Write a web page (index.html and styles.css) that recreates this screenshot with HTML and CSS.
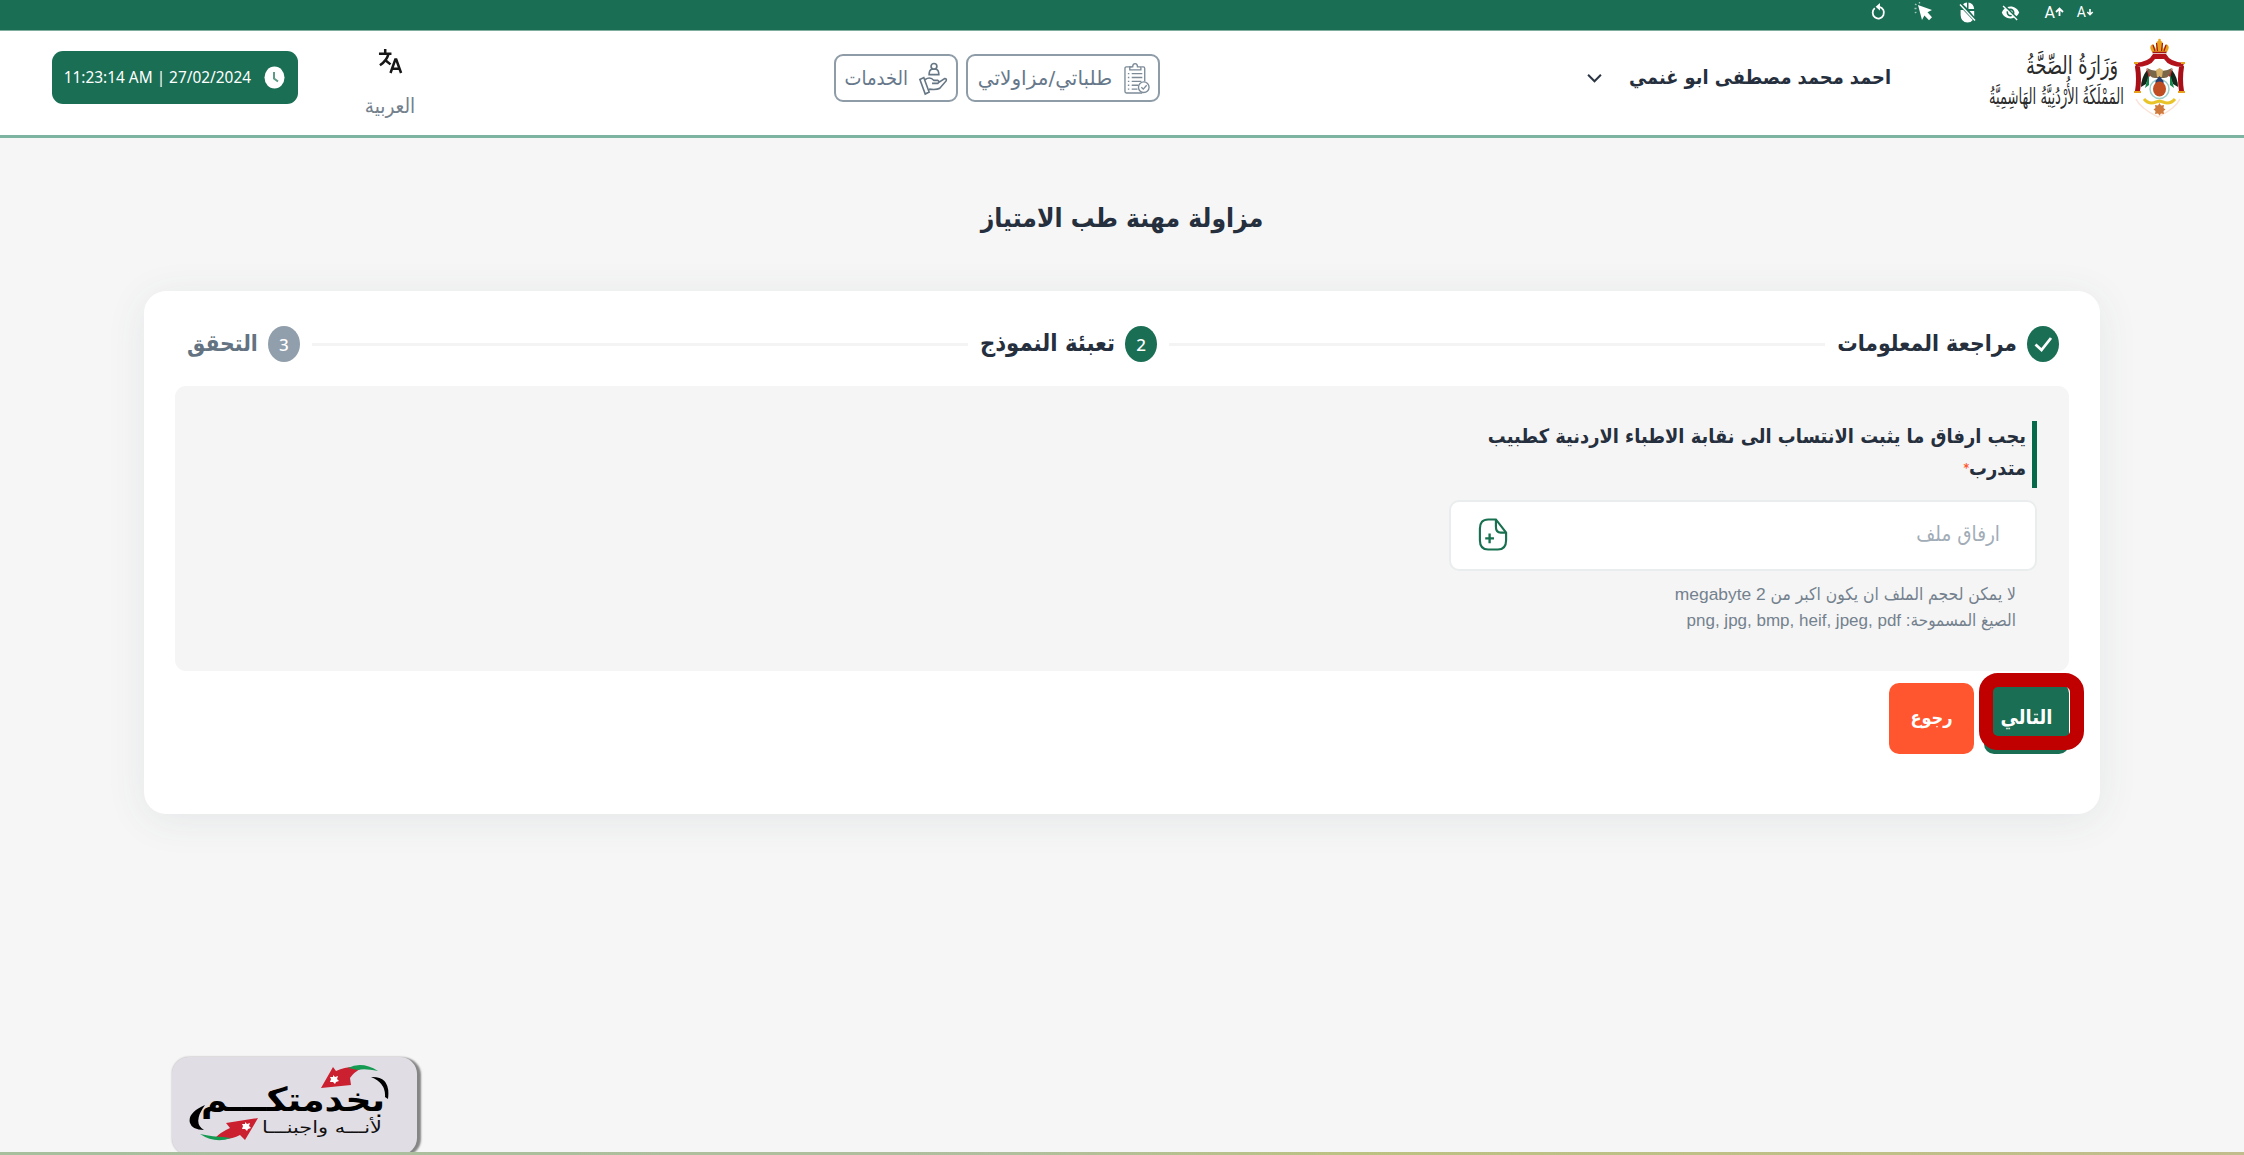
FILE: index.html
```html
<!DOCTYPE html>
<html lang="ar" dir="rtl">
<head>
<meta charset="utf-8">
<title>مزاولة مهنة طب الامتياز</title>
<link rel="stylesheet" href="styles.css">
</head>
<body>
<div class="topbar">
  <span class="a-icon small">A<svg width="8" height="11" viewBox="0 0 9 12"><path d="M4.500 2v6M1.500 5.500l3 3 3-3" fill="none" stroke="#fff" stroke-width="1.800"/></svg></span>
  <span class="a-icon">A<svg width="9" height="12" viewBox="0 0 9 12"><path d="M4.500 10V3M1 6l3.500-3.500L8 6" fill="none" stroke="#fff" stroke-width="1.800"/></svg></span>
  <svg class="ic-eye" width="19" height="19" viewBox="0 0 24 24"><path fill="#fff" d="M12 7c2.760 0 5 2.240 5 5 0 .65-.13 1.260-.36 1.830l2.920 2.920c1.510-1.260 2.700-2.890 3.430-4.750-1.730-4.390-6-7.500-11-7.500-1.400 0-2.740.25-3.980.7l2.160 2.160C10.740 7.130 11.350 7 12 7zM2 4.270l2.280 2.280.46.46C3.080 8.300 1.780 10.020 1 12c1.730 4.390 6 7.500 11 7.500 1.550 0 3.030-.3 4.380-.84l.42.42L19.730 22 21 20.730 3.270 3 2 4.270zM7.530 9.800l1.550 1.550c-.05.21-.08.43-.08.65 0 1.660 1.340 3 3 3 .22 0 .44-.03.65-.08l1.550 1.550c-.67.33-1.410.53-2.200.53-2.760 0-5-2.240-5-5 0-.79.2-1.530.53-2.200zm4.310-.78l3.150 3.150.02-.16c0-1.660-1.340-3-3-3l-.17.01z"/></svg>
  <svg class="ic-mouse" width="17" height="21" viewBox="0 0 17 21"><path fill="#fff" d="M4 2.200Q5.500.6 8 .4V6zM9.500.4Q14.600 1.200 15.200 7H9.500zM1.600 8h2.600l9.600 10.100Q12 20.600 8.500 20.600 1.800 20.200 1.600 13zM10.500 9h4.700v5.400z"/><path d="M1 2.500l15 16" stroke="#fff" stroke-width="1.400"/></svg>
  <svg class="ic-cursor" width="19" height="20" viewBox="0 0 19 20"><path fill="#fff" d="M4 3l14 5-4.500 2.200 4.500 5-3 3-4.600-4.600L8 18z"/><path d="M.5 6.500h2M1 2l1.500 1M5.500 0v1.500M.8 11l1.600-1" stroke="#fff" stroke-opacity=".6" stroke-width="1.300"/></svg>
  <svg class="ic-reset" width="15" height="18" viewBox="0 0 16 19"><path d="M4 5.300A6 6.300 0 1 0 9 4" fill="none" stroke="#fff" stroke-width="1.900"/><path d="M9.500 0v8L5 4z" fill="#fff"/></svg>
</div>

<header class="header">
  <svg class="brand" width="200" height="84" viewBox="0 0 200 84" direction="rtl">
    <g class="calligraphy">
      <text x="131" y="36" font-size="25" textLength="92" lengthAdjust="spacingAndGlyphs">وَزَارَةُ الصِّحَّةُ</text>
      <text x="137" y="66" font-size="22" textLength="135" lengthAdjust="spacingAndGlyphs">المَمْلَكَةُ الأُرْدُنِيَّةُ الهَاشِمِيَّةُ</text>
    </g>
    <path d="M149 61q4 9 22 18 18-9 22-18" fill="none" stroke="#fbe3d8" stroke-width="1.500"/>
    <path d="M165 14q-4-6 1-8l3 5 .5-7 3-2 3 2 .5 7 3-5q5 2 1 8z" fill="#e8a21c"/>
    <path d="M168 13l-2-6M170.500 13l-1-8M174.500 13l1-8M177 13l2-6" stroke="#a31515" stroke-width="1.200"/>
    <circle cx="172.500" cy="2" r="1.300" fill="#e8a21c"/>
    <path d="M165.500 14.500h14" stroke="#a31515" stroke-width="1.600"/>
    <path d="M148 25q14-1 18-9h13q4 8 18 9l-1 4q-14 0-19-8h-9q-5 8-19 8z" fill="#b3121b"/>
    <path d="M148 28l5 1q2 12 0 24h-5q2-12 0-24zM197 28l-5 1q-2 12 0 24h5q-2-12 0-24z" fill="#a80f17"/>
    <path d="M147 54h7M191 54h7M147 25h4M194 25h4" stroke="#e8a21c" stroke-width="2"/>
    <path d="M160 32q-6 8-6 17l5-3 4-10zM185 32q6 8 6 17l-5-3-4-10z" fill="#15261c"/>
    <path d="M162 35l-4 15 4-3zM183 35l4 15-4-3z" fill="#12864b"/>
    <path d="M159 30l5 7-2 2zM186 30l-5 7 2 2z" fill="#d01e2a"/>
    <path d="M160 30q7 4 12.500 2 5.500 2 12.500-2-2 10-8 10h-9q-6 0-8-10z" fill="#7a6648"/>
    <path d="M169 32l3.500-2 3.500 2-1 7h-5z" fill="#d8b36b"/>
    <circle cx="172.500" cy="51" r="9.500" fill="none" stroke="#9ed0cb" stroke-width="1.500"/>
    <path d="M168.500 43l4-5 4 5v3h-8z" fill="#253e6d"/>
    <ellipse cx="172.500" cy="51" rx="6.500" ry="7.500" fill="#bf4f22"/>
    <path d="M157 61q5 6 12 3l3.500-1 3.500 1q7 3 12-3" fill="none" stroke="#e9c429" stroke-width="3"/>
    <path d="M172.500 65l1.500 2.500 3-.5-.5 3 2 1.500-2 1.500.5 3-3-.5-1.500 2-1.500-2-3 .5.500-3-2-1.500 2-1.500-.5-3 3 .5z" fill="#cf7a3c"/>
  </svg>

  <div class="user">
    <span>احمد محمد مصطفى ابو غنمي</span>
    <svg width="17" height="11" viewBox="0 0 18 12"><path d="M2 2l7 7 7-7" fill="none" stroke="#2b3543" stroke-width="2.200"/></svg>
  </div>

  <nav class="nav">
    <a class="nav-btn requests">
      <svg width="27" height="33" viewBox="0 0 28 34" fill="none" stroke="#7d8b98" stroke-width="1.400"><path d="M8 5H2.500q-1.500 0-1.500 1.500v24q0 1.500 1.500 1.500H19M18 5h2q1.500 0 1.500 1.500V20"/><path d="M6 8V5h3q0-3.500 2.500-3.500T14 5h3.500v3z"/><path d="M8 12h11M8 16h11M8 20h10M8 24h7M8 28h6"/><path d="M4 12h1.500M4 16h1.500M4 20h1.500M4 24h1.500M4 28h1.500"/><circle cx="20.500" cy="26" r="5.500" fill="#fff"/><path d="M18 26l2 2 3.500-4"/></svg>
      <span>طلباتي/مزاولاتي</span>
    </a>
    <a class="nav-btn services">
      <svg width="30" height="33" viewBox="0 0 30 34" fill="none" stroke="#667684" stroke-width="1.700"><circle cx="16" cy="4.500" r="3"/><path d="M11 13q0-5 3-5.500h4q3 .5 3 5.500z"/><path d="M1.500 18l4-2 5.500 15-4 2zM7 18q5-3.500 9 1h4q2 1 0 3h-6M21 21l6-4q2.500 0 1.500 2.500L22 27q-3 2-11 1"/></svg>
      <span>الخدمات</span>
    </a>
  </nav>

  <div class="lang">
    <svg width="25" height="27" viewBox="0 0 26 28" fill="none" stroke="#171717" stroke-width="2.600"><path d="M1 6h13M7.500 1v5M11 6q-2 7-9 12M8 13l5 4"/><path d="M13 26l5-14h1l5 14M15 21.500h7.500"/></svg>
    <span>العربية</span>
  </div>

  <div class="clock">
    <svg width="21" height="23" viewBox="0 0 21 23"><ellipse cx="10.500" cy="11.500" rx="10" ry="11" fill="#fff"/><path d="M10 6v6.500l4 3" fill="none" stroke="#5d9b86" stroke-width="2"/></svg>
    <span dir="ltr">11:23:14 AM | 27/02/2024</span>
  </div>
</header>

<main>
  <h1>مزاولة مهنة طب الامتياز</h1>
  <section class="card">
    <div class="steps">
      <span class="dot"><svg width="19" height="17" viewBox="0 0 19 17"><path d="M1.500 8.500l6 5.500L17 2" fill="none" stroke="#fff" stroke-width="2.800"/></svg></span>
      <span class="step-name s1">مراجعة المعلومات</span>
      <i class="line"></i>
      <span class="dot">2</span>
      <span class="step-name s2">تعبئة النموذج</span>
      <i class="line"></i>
      <span class="dot idle">3</span>
      <span class="step-name s3">التحقق</span>
    </div>
    <div class="panel">
      <div class="field">
        <label>يجب ارفاق ما يثبت الانتساب الى نقابة الاطباء الاردنية كطبيب<br>متدرب<sup>*</sup></label>
        <div class="upload">
          <span>ارفاق ملف</span>
          <svg width="30" height="33" viewBox="0 0 30 34" fill="none" stroke="#17704f" stroke-width="2.200"><path d="M18 1.500H10Q1.500 1.500 1.500 11v12q0 9.500 8.500 9.500h10q8.500 0 8.500-9.500V15z"/><path d="M18 1.500V9q0 6 5 6h5.500"/><path d="M11.500 16v10M7 21h9" stroke-width="2.400"/></svg>
        </div>
        <p class="hint">لا يمكن لحجم الملف ان يكون اكبر من 2 megabyte</p>
        <p class="hint last">الصيغ المسموحة: png, jpg, bmp, heif, jpeg, pdf</p>
      </div>
    </div>
    <div class="actions">
      <button class="btn next">التالي<i class="marker"></i></button>
      <button class="btn back">رجوع</button>
    </div>
  </section>
</main>

<div class="badge">
  <svg width="245" height="98" viewBox="0 0 245 98" direction="rtl">
    <text x="213" y="54" class="motto" textLength="184" lengthAdjust="spacingAndGlyphs">بخدمتكـــم</text>
    <text x="210" y="76" class="sub" textLength="120" lengthAdjust="spacingAndGlyphs">لأنـــه واجبنـــا</text>
    <path d="M199 20q20-1 17 22l-3-2q1-14-14-20zM33 48q-18 8-15 18 2 7 14 7-12-7 1-25z" fill="#000"/>
    <path d="M149 31l12-21 3 4q13-6 26-3-8 4-12 10l1 7z" fill="#cb2030"/>
    <path d="M176 11q14-7 30 3-14-3-20-1z" fill="#159a52"/>
    <path d="M86 61L54 66l4 5q-9 4-15 10 14 3 25-3l5 5z" fill="#cb2030"/>
    <path d="M28 77q14 3 23 3l8 1q-16 6-31-4z" fill="#159a52"/>
    <path d="M161 18l2 2 3-1-1 3 2 2-3 1-1 2-2-2-3 0 1-3-1-2 3 0zM73 65l2 2 3-1-1 3 2 2-3 1-1 2-2-2-3 0 1-3-1-2 3 0z" fill="#fff"/>
  </svg>
</div>
<div class="bottom-strip"></div>
</body>
</html>
```
FILE: styles.css
```css
* { box-sizing: border-box; }
body {
  margin: 0;
  height: 1155px;
  overflow: hidden;
  display: flex;
  flex-direction: column;
  background: #f6f6f6;
  color: #252f3d;
  font-family: "DejaVu Sans Condensed", "DejaVu Sans", sans-serif;
  font-stretch: condensed;
  font-size: 20px;
  white-space: nowrap;
}
svg { display: block; flex: none; overflow: visible; }

.topbar {
  height: 31px;
  flex: none;
  display: flex;
  align-items: center;
  padding: 0 150px 6px 0;
  background: #1a6e54;
  border-bottom: 1px solid #7fae9e;
  color: #fff;
}
.a-icon {
  display: flex;
  flex-direction: row-reverse;
  align-items: center;
  font: 14px Roboto, sans-serif;
}
.a-icon:not(.small) { margin-right: 13px; font-size: 16px; }
.ic-eye { margin-right: 24px; }
.ic-mouse { margin-right: 25px; }
.ic-cursor { margin-right: 26px; }
.ic-reset { margin-right: 28px; }

.header {
  height: 107px;
  flex: none;
  display: flex;
  align-items: flex-start;
  padding: 0 57px 0 52px;
  background: #fff;
  border-bottom: 3px solid #7db3a1;
}
.brand { margin-top: 7px; }
.calligraphy { font-family: "DejaVu Sans", sans-serif; fill: #2a2a2a; }
.user {
  display: flex;
  align-items: center;
  margin: 33px 96px 0 0;
  font-weight: bold;
  font-size: 19.800px;
  line-height: 28px;
  gap: 26px;
}
.nav { display: flex; gap: 8px; margin: 23px 426px 0 0; }
.nav-btn {
  height: 48px;
  display: flex;
  align-items: center;
  border: 2px solid #8e9ca8;
  border-radius: 9px;
  color: #66788a;
  line-height: 28px;
}
.requests { width: 194px; padding-right: 7px; gap: 12px; font-family: "DejaVu Sans", sans-serif; font-stretch: normal; }
.services { width: 124px; padding-right: 8px; gap: 10px; }
.lang {
  width: 60px;
  margin: 17px auto 0 0;
  display: flex;
  flex-direction: column;
  align-items: center;
  gap: 17px;
  color: #74818d;
  font-size: 20.500px;
  line-height: 28px;
}
.clock {
  width: 246px;
  height: 53px;
  margin: 20px 62px 0 0;
  display: flex;
  align-items: center;
  gap: 13px;
  padding-right: 13px;
  border-radius: 11px;
  background: #1a6e54;
  color: #fff;
  font: 15.400px "Noto Sans", sans-serif;
}

main { padding: 0 144px; }
h1 {
  margin: 64px 0 0;
  height: 89px;
  line-height: 32px;
  text-align: center;
  font-size: 26.200px;
}
.card {
  height: 523px;
  padding: 35px 31px 0;
  background: #fff;
  border-radius: 22px;
  box-shadow: 0 6px 40px rgba(60, 80, 90, .09);
}
.steps { height: 36px; display: flex; align-items: center; margin: 0 10px 24px 12px; }
.dot {
  width: 32px;
  height: 36px;
  flex: none;
  display: flex;
  align-items: center;
  justify-content: center;
  border-radius: 50%;
  background: #1a6e54;
  color: #fff;
  font: 500 17px "Noto Sans", sans-serif;
}
.dot.idle { background: #919eab; }
.step-name { margin-right: 10px; font-weight: bold; font-size: 22.700px; line-height: 32px; position: relative; top: -1px; }
.s2 { font-size: 23.600px; }
.s3 { color: #637381; }
.line { flex: 1; height: 3px; margin: 0 12px; background: #f4f4f5; }

.panel { height: 285px; padding: 35px 32px 0; background: #f5f5f5; border-radius: 11px; }
.field { width: 588px; }
label {
  display: block;
  height: 67px;
  padding-right: 6px;
  border-right: 5px solid #066a4a;
  font-weight: bold;
  font-size: 19.850px;
  line-height: 32px;
}
sup { color: #ff5630; font-size: 12px; line-height: 0; vertical-align: 3px; }
.upload {
  height: 71px;
  margin-top: 12px;
  display: flex;
  align-items: center;
  justify-content: space-between;
  padding: 0 35px 3px 27px;
  background: #fff;
  border: 2px solid #eaedee;
  border-radius: 10px;
  color: #a1acb7;
  font-size: 20.500px;
}
.hint {
  margin: 10px 21px 0 0;
  color: #74818e;
  font: 17.400px/26px "Liberation Sans", "DejaVu Sans Condensed", sans-serif;
}
.hint.last { margin-top: 1px; font-size: 17px; }

.actions { display: flex; gap: 10px; margin-top: 12px; }
.btn {
  position: relative;
  width: 85px;
  height: 71px;
  padding: 0 0 3px;
  border: 0;
  border-radius: 10px;
  background: #ff5630;
  color: #fff;
  font: bold 18px "DejaVu Sans Condensed", "DejaVu Sans", sans-serif;
}
.btn.next { background: #1a6e54; font-size: 20px; }
.marker {
  position: absolute;
  inset: -10px -15px 4px -5px;
  border: 14px solid #c00000;
  border-radius: 19px;
}

.badge {
  width: 245px;
  height: 98px;
  margin: 243px auto 0 172px;
  flex: none;
  background: #e1dde5;
  border-radius: 17px;
  box-shadow: 4px 1px 2px #858585, 0 0 2px #aaa;
}
.motto { font: bold 33px "DejaVu Sans", sans-serif; }
.sub { font: 17px "DejaVu Sans", sans-serif; fill: #111; }
.bottom-strip {
  position: absolute;
  left: 0;
  right: 0;
  bottom: 0;
  height: 3px;
  background: linear-gradient(90deg, #a7bf9d, #b0bf9d 45%, #bcc282 60%, #c1bd8c);
}
```
